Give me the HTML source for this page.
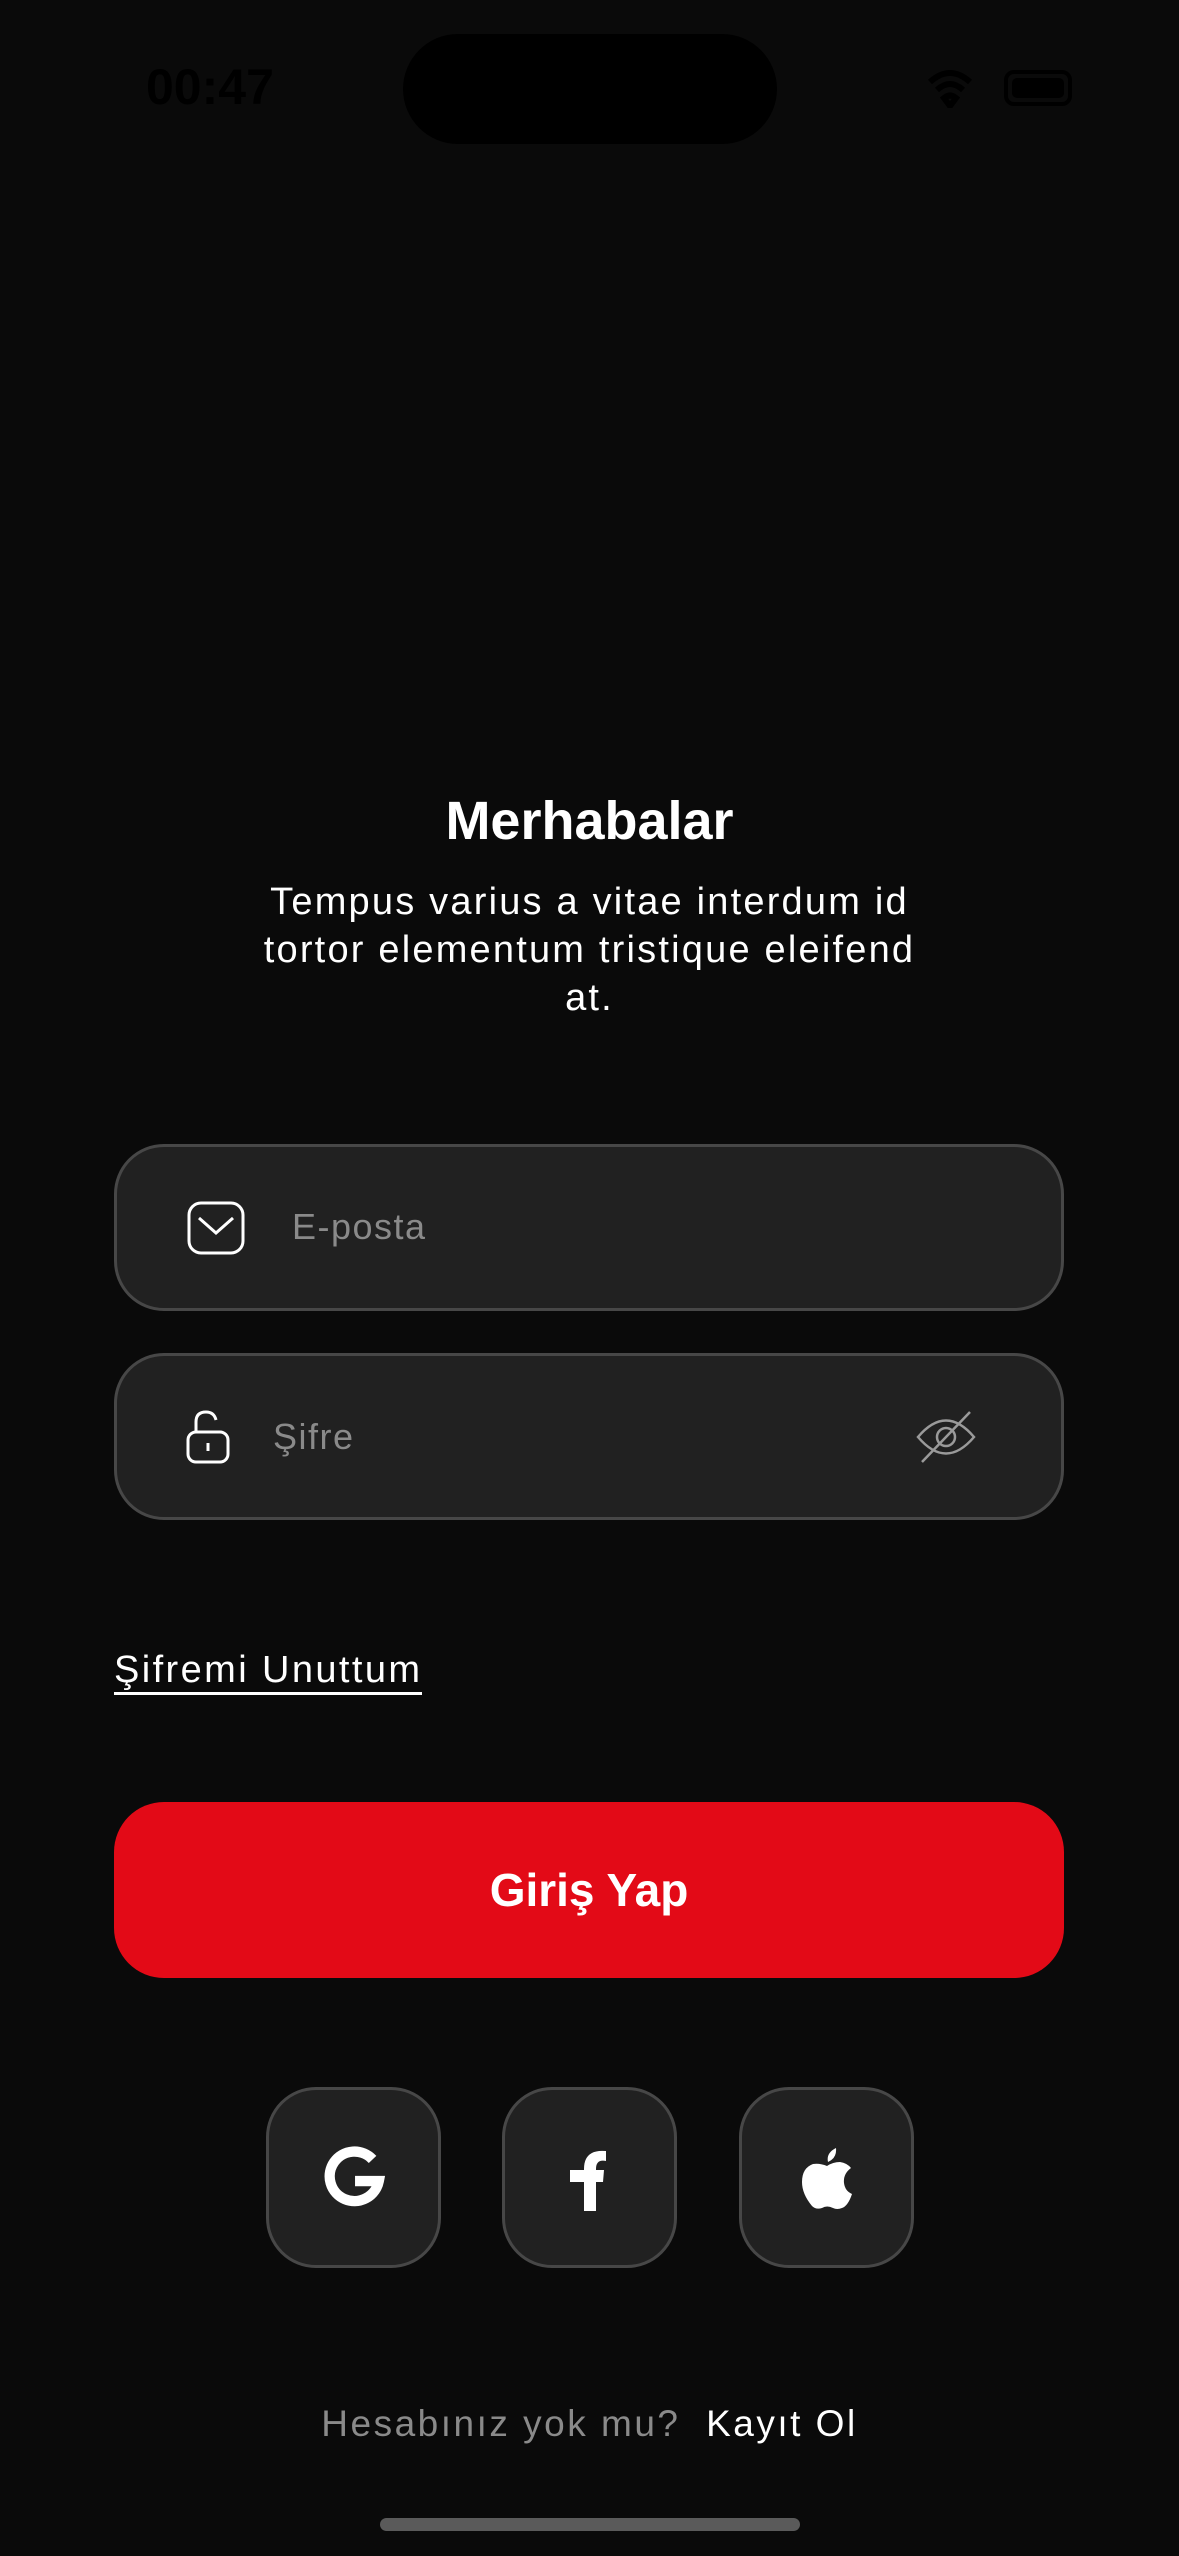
<!DOCTYPE html>
<html><head><meta charset="utf-8">
<style>
*{margin:0;padding:0;box-sizing:border-box}
html,body{width:1179px;height:2556px;background:#0a0a0a;overflow:hidden;font-family:"Liberation Sans",sans-serif;color:#fff}
.abs{position:absolute}
.field{position:absolute;left:114px;width:950px;height:167px;background:#212121;border:3px solid #474747;border-radius:50px}
.soc{position:absolute;top:2087px;width:175px;height:181px;background:#212121;border:3px solid #474747;border-radius:50px;display:flex;align-items:center;justify-content:center}
</style></head><body>
<div class="abs" style="left:146px;top:58px;font-size:50px;font-weight:bold;color:#000">00:47</div>
<div class="abs" style="left:403px;top:34px;width:374px;height:110px;background:#000;border-radius:55px"></div>
<div class="abs" style="left:1004px;top:70px;width:68px;height:36px;border:4px solid #000;border-radius:10px;"><div style="margin:4px;height:20px;background:#000;border-radius:5px"></div></div>
<svg class="abs" style="left:925px;top:68px" width="50" height="40" viewBox="0 0 50 40"><path d="M5 14 Q25 -4 45 14 M12 22 Q25 10 38 22 M19 30 Q25 25 31 30 L25 38 Z" stroke="#000" stroke-width="6" fill="none"/></svg>

<div class="abs" style="left:0;width:1179px;top:788px;text-align:center;font-size:54px;font-weight:bold;line-height:66px">Merhabalar</div>
<div class="abs" style="left:0;width:1179px;top:878px;text-align:center;font-size:38px;line-height:48px;letter-spacing:2.2px">Tempus varius a vitae interdum id<br>tortor elementum tristique eleifend<br>at.</div>

<div class="field" style="top:1144px"></div>
<svg class="abs" style="left:187px;top:1201px" width="58" height="54" viewBox="0 0 58 54"><rect x="2" y="2" width="54" height="50" rx="12" fill="none" stroke="#fff" stroke-width="3"/><path d="M12 17 L29 32 L46 17" fill="none" stroke="#fff" stroke-width="3"/></svg>
<div class="abs" style="left:292px;top:1206px;font-size:36px;color:#8a8a8a;letter-spacing:1.5px">E-posta</div>

<div class="field" style="top:1353px"></div>
<svg class="abs" style="left:186px;top:1410px" width="44" height="54" viewBox="0 0 44 54"><path d="M10 22 V12 Q10 2 20 2 Q28 2 30 10" fill="none" stroke="#fff" stroke-width="3"/><rect x="2" y="22" width="40" height="30" rx="8" fill="none" stroke="#fff" stroke-width="3"/><path d="M22 33 V41" stroke="#fff" stroke-width="3"/></svg>
<div class="abs" style="left:273px;top:1416px;font-size:36px;color:#8a8a8a;letter-spacing:1.5px">Şifre</div>
<svg class="abs" style="left:914px;top:1410px" width="64" height="54" viewBox="0 0 64 54"><path d="M4 27 Q32 -6 60 27 Q32 60 4 27 Z" fill="none" stroke="#9a9a9a" stroke-width="2.5"/><circle cx="32" cy="27" r="9" fill="none" stroke="#9a9a9a" stroke-width="2.5"/><path d="M8 52 L56 2" stroke="#9a9a9a" stroke-width="2.5"/></svg>

<div class="abs" style="left:114px;top:1648px;font-size:38px;line-height:44px;letter-spacing:2.4px;border-bottom:3px solid #fff">Şifremi Unuttum</div>

<div class="abs" style="left:114px;top:1802px;width:950px;height:176px;background:#e30a17;border-radius:50px;display:flex;align-items:center;justify-content:center;font-size:46px;font-weight:bold">Giriş Yap</div>

<div class="soc" style="left:266px"><svg width="62" height="64" viewBox="0 0 60 62"><path d="M48 13 A24 24 0 1 0 54 34 H31" fill="none" stroke="#fff" stroke-width="10"/></svg></div>
<div class="soc" style="left:502px"><svg width="40" height="66" viewBox="0 0 40 66"><path d="M14 66 V24 Q14 4 36 6 V16 Q26 14 26 24 V66 Z M0 25 H34 L33 37 H0 Z" fill="#fff"/></svg></div>
<div class="soc" style="left:739px"><svg width="54" height="64" viewBox="0 0 54 64"><path d="M36 2 Q37 12 28 16 Q26 7 36 2 Z M27 20 Q33 16 40 16 Q47 17 51 22 Q43 28 44 37 Q45 45 52 48 Q48 60 42 62 Q37 64 33 62 Q27 59 22 62 Q16 64 12 60 Q2 48 2 36 Q2 22 13 18 Q20 17 27 20 Z" fill="#fff"/></svg></div>

<div class="abs" style="left:0;width:1179px;top:2403px;text-align:center;font-size:37px;letter-spacing:2.5px"><span style="color:#8a8a8a">Hesabınız yok mu?</span>&nbsp; <span>Kayıt Ol</span></div>
<div class="abs" style="left:380px;top:2518px;width:420px;height:13px;background:#5a5a5a;border-radius:7px"></div>
</body></html>
